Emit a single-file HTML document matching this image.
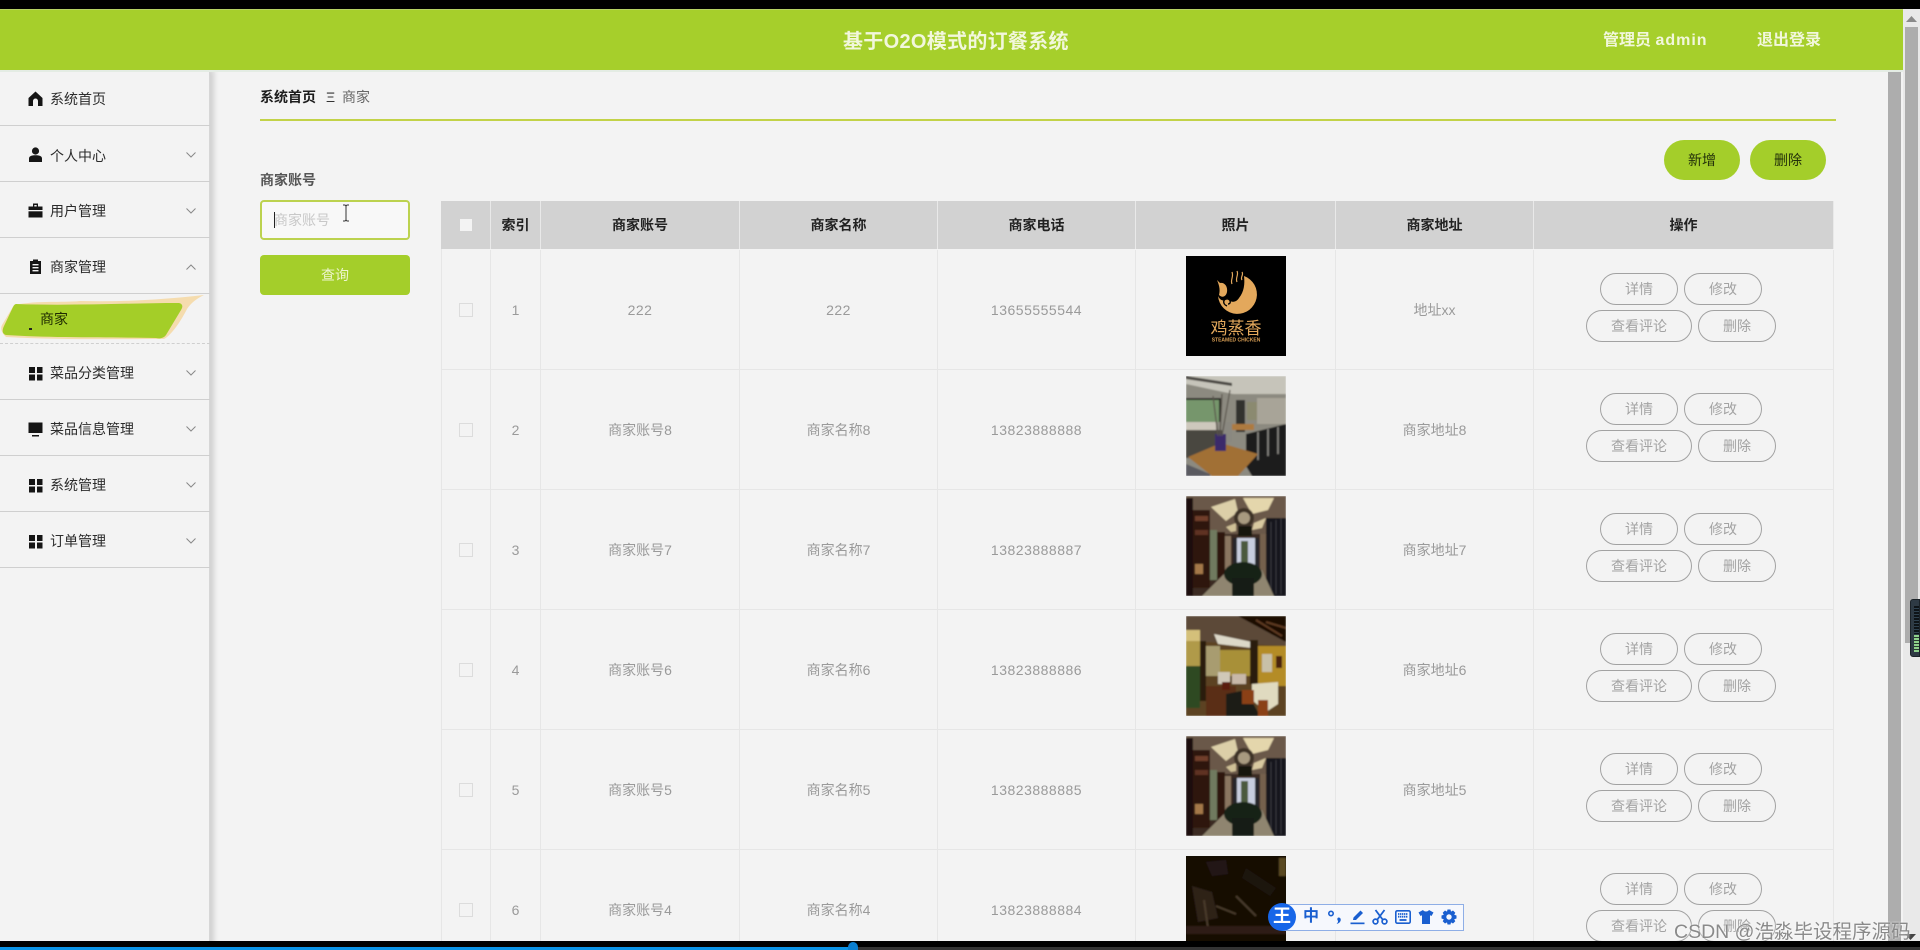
<!DOCTYPE html>
<html lang="zh">
<head>
<meta charset="utf-8">
<title>基于O2O模式的订餐系统</title>
<style>
*{box-sizing:border-box}
html,body{margin:0;padding:0;width:1920px;height:950px;overflow:hidden;background:#000;font-family:"Liberation Sans","Noto Sans CJK SC",sans-serif;font-size:14px}
.a{position:absolute}
#stage{position:absolute;left:0;top:9px;width:1920px;height:932px;overflow:hidden;background:#f3f3f3}
#page{position:absolute;left:0;top:-9px;width:1920px;height:950px;filter:blur(.3px)}
.hdr{left:0;top:9px;width:1903px;height:61px;background:#a6cf2b;border-top:1px solid #b6d263}
.hw{color:#f2f7dc;font-weight:bold;line-height:24px;white-space:nowrap}
.side{left:0;top:70px;width:210px;height:880px;background:#f3f3f3;box-shadow:4px 0 5px rgba(0,0,0,.14);border-right:1px solid #d6d6d6}
.ln{left:0;width:210px;height:1px;background:#cfcfcf}
.mt{left:50px;color:#2b2b2b;line-height:20px;white-space:nowrap}
.ic{left:28px;width:15px;height:15px}
.ch{left:186px;width:10px;height:6px}
.th{top:201px;height:48px;background:#d2d2d2;line-height:48px;text-align:center;font-weight:bold;color:#222;border-right:1px solid #e9e9e9}
.td{height:120px;line-height:120px;text-align:center;color:#9a9a9a;border-right:1px solid #e6e6e6;border-bottom:1px solid #e6e6e6}
.n{letter-spacing:.5px}
.op{height:32px;line-height:30px;border:1px solid #a2a2a2;border-radius:16px;text-align:center;color:#a3a3a3;background:transparent}
.cb{left:459px;width:14px;height:14px;border:1px solid #dcdcdc;background:#f3f3f3}
.pic{left:1186px;width:100px;height:100px;overflow:hidden}
.pic svg{display:block;width:100px;height:100px}
</style>
</head>
<body>
<svg width="0" height="0" style="position:absolute">
<defs>
<filter id="b"><feGaussianBlur stdDeviation="0.7"/></filter>
<symbol id="s3" viewBox="0 0 100 100">
<g filter="url(#b)">
<rect width="100" height="100" fill="#3a2a20"/>
<polygon points="0,0 100,0 100,25 82,38 25,38 0,22" fill="#6a594a"/>
<polygon points="25,11 49,3 52,16 40,25" fill="#dccfa8"/>
<polygon points="57,2 88,2 82,14 66,18" fill="#e4d6ac"/>
<polygon points="40,31 50,27 50,35 45,36" fill="#cfc096"/>
<polygon points="68,27 80,22 76,32 66,34" fill="#d8c9a0"/>
<circle cx="58" cy="22" r="10" fill="#3e3028"/><circle cx="58" cy="22" r="6" fill="#a89a80"/>
<rect x="52" y="30" width="14" height="10" fill="#181410"/>
<rect x="0" y="2" width="7" height="98" fill="#1e0e08"/>
<rect x="7" y="14" width="17" height="78" fill="#2e1509"/>
<rect x="9" y="20" width="13" height="5" fill="#6f3c2a"/>
<rect x="9" y="34" width="13" height="5" fill="#5e3020"/>
<rect x="9" y="68" width="8" height="10" fill="#a4784a"/>
<rect x="24" y="34" width="7" height="50" fill="#6f7a5e"/>
<rect x="31" y="36" width="8" height="46" fill="#2e150c"/>
<rect x="39" y="40" width="6" height="34" fill="#8a7660"/>
<rect x="80" y="22" width="20" height="78" fill="#12151a"/>
<path d="M85 26V98M90 24V98M95 22V98" stroke="#3a3a40" stroke-width="1"/>
<rect x="74" y="38" width="6" height="55" fill="#75614e"/>
<rect x="47" y="42" width="26" height="30" fill="#c8cede"/>
<rect x="55" y="45" width="7" height="24" fill="#4c5a3d"/>
<rect x="47" y="42" width="4" height="30" fill="#28282c"/>
<rect x="69" y="42" width="4" height="30" fill="#28282c"/>
<polygon points="42,74 76,74 88,100 16,100" fill="#8f8570"/>
<ellipse cx="57" cy="78" rx="19" ry="12" fill="#182018"/>
<rect x="46" y="82" width="22" height="18" fill="#161b17"/>
</g>
</symbol>
</defs>
</svg>

<div id="stage"><div id="page">

<div class="a" style="left:1888px;top:70px;width:13px;height:880px;background:#adadad"></div>
<div class="a" style="left:1903px;top:9px;width:17px;height:941px;background:#e9e9e9"></div>
<div class="a" style="left:1905px;top:27px;width:13px;height:616px;background:#adadad"></div>
<svg class="a" style="left:1906px;top:16px" width="11" height="6"><polygon points="5.5,0 11,6 0,6" fill="#8a8a8a"/></svg>
<svg class="a" style="left:1905px;top:934px" width="11" height="6"><polygon points="5.5,6 11,0 0,0" fill="#444"/></svg>
<div class="a" style="left:1910px;top:599px;width:10px;height:58px;background:#2e3a44;border-radius:3px 0 0 3px;border:1px solid #1b2228"></div>
<div class="a" style="left:1914px;top:606px;width:5px;height:28px;background:repeating-linear-gradient(#0e1418 0 2px,#2f4250 2px 3px)"></div>
<div class="a" style="left:1914px;top:635px;width:5px;height:17px;background:repeating-linear-gradient(#8fd18b 0 2px,#2a3a30 2px 3px)"></div>

<div class="a side">
  <div class="a ln" style="top:55px"></div>
  <div class="a ln" style="top:111px"></div>
  <div class="a ln" style="top:167px"></div>
  <div class="a ln" style="top:223px"></div>
  <div class="a" style="left:0;top:273px;width:210px;border-top:1px dashed #cfcfcf"></div>
  <div class="a ln" style="top:329px"></div>
  <div class="a ln" style="top:385px"></div>
  <div class="a ln" style="top:441px"></div>
  <div class="a ln" style="top:497px"></div>
</div>

<!-- icons -->
<svg class="a ic" style="top:91px" viewBox="0 0 15 15"><path d="M7.5 0.5 L14.5 7 V15 H10 V10 A2.5 2.5 0 0 0 5 10 V15 H0.5 V7 Z" fill="#151515"/></svg>
<svg class="a ic" style="top:147px" viewBox="0 0 15 15"><circle cx="7.5" cy="4" r="3.6" fill="#151515"/><path d="M1 15 V11.5 C1 9 4 8.3 7.5 8.3 C11 8.3 14 9 14 11.5 V15 Z" fill="#151515"/></svg>
<svg class="a ic" style="top:203px" viewBox="0 0 15 15"><path d="M5 0.5 H10 V3.5 H14.5 V7 H0.5 V3.5 H5 Z M6.3 2 V3.5 H8.7 V2 Z" fill="#151515" fill-rule="evenodd"/><rect x="0.5" y="8.3" width="14" height="6.2" fill="#151515"/></svg>
<svg class="a ic" style="top:259px" viewBox="0 0 15 15"><path d="M2 2 H5 V0.5 H10 V2 H13 V15 H2 Z" fill="#151515"/><rect x="4.5" y="5" width="6" height="1.4" fill="#f3f3f3"/><rect x="4.5" y="8" width="6" height="1.4" fill="#f3f3f3"/><rect x="4.5" y="11" width="6" height="1.4" fill="#f3f3f3"/></svg>
<svg class="a ic" style="top:366px" viewBox="0 0 15 15"><path d="M1 1h6v6h-6zM9 1h5.5v6h-5.5zM1 8.5h6v6h-6zM9 8.5h5.5v6h-5.5z" fill="#151515"/></svg>
<svg class="a ic" style="top:422px" viewBox="0 0 15 15"><path d="M0.5 0.5H14.5V11H0.5Z" fill="#151515"/><path d="M4 14.5H11V13H4Z" fill="#151515"/></svg>
<svg class="a ic" style="top:478px" viewBox="0 0 15 15"><path d="M1 1h6v6h-6zM9 1h5.5v6h-5.5zM1 8.5h6v6h-6zM9 8.5h5.5v6h-5.5z" fill="#151515"/></svg>
<svg class="a ic" style="top:534px" viewBox="0 0 15 15"><path d="M1 1h6v6h-6zM9 1h5.5v6h-5.5zM1 8.5h6v6h-6zM9 8.5h5.5v6h-5.5z" fill="#151515"/></svg>

<div class="a mt" style="top:89px">系统首页</div>
<div class="a mt" style="top:146px">个人中心</div>
<div class="a mt" style="top:201px">用户管理</div>
<div class="a mt" style="top:257px">商家管理</div>
<div class="a mt" style="top:363px">菜品分类管理</div>
<div class="a mt" style="top:419px">菜品信息管理</div>
<div class="a mt" style="top:475px">系统管理</div>
<div class="a mt" style="top:531px">订单管理</div>

<svg class="a ch" style="top:152px" viewBox="0 0 10 6"><path d="M0.5 0.5 L5 5 L9.5 0.5" fill="none" stroke="#888" stroke-width="1"/></svg>
<svg class="a ch" style="top:208px" viewBox="0 0 10 6"><path d="M0.5 0.5 L5 5 L9.5 0.5" fill="none" stroke="#888" stroke-width="1"/></svg>
<svg class="a ch" style="top:264px" viewBox="0 0 10 6"><path d="M0.5 5.5 L5 1 L9.5 5.5" fill="none" stroke="#888" stroke-width="1"/></svg>
<svg class="a ch" style="top:370px" viewBox="0 0 10 6"><path d="M0.5 0.5 L5 5 L9.5 0.5" fill="none" stroke="#888" stroke-width="1"/></svg>
<svg class="a ch" style="top:426px" viewBox="0 0 10 6"><path d="M0.5 0.5 L5 5 L9.5 0.5" fill="none" stroke="#888" stroke-width="1"/></svg>
<svg class="a ch" style="top:482px" viewBox="0 0 10 6"><path d="M0.5 0.5 L5 5 L9.5 0.5" fill="none" stroke="#888" stroke-width="1"/></svg>
<svg class="a ch" style="top:538px" viewBox="0 0 10 6"><path d="M0.5 0.5 L5 5 L9.5 0.5" fill="none" stroke="#888" stroke-width="1"/></svg>

<!-- active brush -->
<svg class="a" style="left:0;top:293px" width="210" height="50" viewBox="0 0 210 50">
  <path d="M14 12 C40 7 60 10 80 8 C120 9 160 7 204 2 C196 6 191 10 187 16 C182 26 172 42 164 46 C120 46 60 47 6 44 C2 40 0 36 2 32 Z" fill="#f5dcae"/>
  <path d="M16 11 C70 13 130 10 179 10 C183 11 183 14 181 17 L166 42 C164 45 160 46 156 45 C110 44 50 45 6 42 C2 41 2 37 4 33 L13 14 C14 12 15 11 16 11 Z" fill="#a4ce28"/>
</svg>
<div class="a" style="left:40px;top:309px;line-height:20px;color:#1e2a00">商家</div>
<div class="a" style="left:29px;top:328px;width:3px;height:2px;background:#222"></div>

<!-- header -->
<div class="a" style="left:0;top:70px;width:1903px;height:2px;background:#e4ece4"></div>
<div class="a hdr"></div>
<div class="a hw" style="left:843px;top:30px;font-size:20px;letter-spacing:.3px">基于O2O模式的订餐系统</div>
<div class="a hw" style="left:1603px;top:29px;font-size:16px">管理员 <span style="letter-spacing:1px">admin</span></div>
<div class="a hw" style="left:1757px;top:29px;font-size:16px">退出登录</div>

<!-- breadcrumb -->
<div class="a" style="left:260px;top:87px;line-height:20px;font-weight:bold;color:#1c1c1c">系统首页</div>
<div class="a" style="left:326px;top:87px;line-height:20px;color:#333">Ξ</div>
<div class="a" style="left:342px;top:87px;line-height:20px;color:#666">商家</div>
<div class="a" style="left:260px;top:118.5px;width:1576px;height:2px;background:#c2d247"></div>

<!-- action buttons -->
<div class="a" style="left:1664px;top:140px;width:76px;height:40px;border-radius:20px;background:#a4ce2a;color:#23300a;text-align:center;line-height:40px">新增</div>
<div class="a" style="left:1750px;top:140px;width:76px;height:40px;border-radius:20px;background:#a4ce2a;color:#23300a;text-align:center;line-height:40px">删除</div>

<!-- search -->
<div class="a" style="left:260px;top:170px;line-height:20px;color:#555;font-weight:bold">商家账号</div>
<div class="a" style="left:260px;top:200px;width:150px;height:40px;border:2px solid #bcd24f;border-radius:4px;background:#f8f8f8;padding-left:12px;line-height:37px;color:#c8c8c8">商家账号</div>
<div class="a" style="left:274px;top:212px;width:1px;height:16px;background:#222"></div>
<svg class="a" style="left:342px;top:204px" width="8" height="18" viewBox="0 0 8 18"><path d="M1 1 H3 L4 2 L5 1 H7 M4 2 V16 M1 17 H3 L4 16 L5 17 H7" fill="none" stroke="#333" stroke-width="1"/></svg>
<div class="a" style="left:260px;top:255px;width:150px;height:40px;border-radius:4px;background:#a4ce2a;color:#eef5cf;text-align:center;line-height:40px">查询</div>

<!-- table head -->
<div class="a th" style="left:441px;width:50px"></div>
<div class="a" style="left:460px;top:219px;width:12px;height:12px;background:#f3f3f3"></div>
<div class="a th" style="left:491px;width:50px">索引</div>
<div class="a th" style="left:541px;width:199px">商家账号</div>
<div class="a th" style="left:740px;width:198px">商家名称</div>
<div class="a th" style="left:938px;width:198px">商家电话</div>
<div class="a th" style="left:1136px;width:200px">照片</div>
<div class="a th" style="left:1336px;width:198px">商家地址</div>
<div class="a th" style="left:1534px;width:300px">操作</div>
<div class="a" style="left:441px;top:249px;width:1px;height:700px;background:#e6e6e6"></div>

<!-- row 1 -->
<div class="a td" style="left:441px;top:250px;width:50px"></div>
<div class="a cb" style="top:303px"></div>
<div class="a td" style="left:491px;top:250px;width:50px">1</div>
<div class="a td n" style="left:541px;top:250px;width:199px">222</div>
<div class="a td n" style="left:740px;top:250px;width:198px">222</div>
<div class="a td n" style="left:938px;top:250px;width:198px">13655555544</div>
<div class="a td" style="left:1136px;top:250px;width:200px"></div>
<div class="a td" style="left:1336px;top:250px;width:198px">地址xx</div>
<div class="a td" style="left:1534px;top:250px;width:300px"></div>
<div class="a pic" style="top:256px;background:#000">
<svg viewBox="0 0 100 100">
<path d="M58 20 A19.5 19.5 0 1 1 32 40 C35 46 39 45 41 42 C44 47 50 47 53 42 C58 36 59 28 58 20 Z" fill="#e3a85c"/>
<path d="M41 50 C36 48 37 42 42 43 C45 44 45 48 42 48" fill="none" stroke="#000" stroke-width="1.4"/>
<path d="M31 24 L34 27 C38 26 42 30 41 36 C40 41 36 42 33 39 C34 35 34 31 31 24 Z" fill="#e3a85c"/>
<path d="M46 28 C44 24 48 21 46 16 M51 26 C49 22 53 19 51 15 M56 24 C54 21 58 19 56 16" fill="none" stroke="#e3a85c" stroke-width="1.2"/>
<text x="50" y="78" text-anchor="middle" font-size="17" fill="#e3a85c" font-family="'Noto Sans CJK SC',sans-serif">鸡蒸香</text>
<text x="50" y="85.5" text-anchor="middle" font-size="5" font-weight="bold" fill="#d99f55" font-family="'Liberation Sans',sans-serif">STEAMED CHICKEN</text>
</svg></div>
<div class="a op" style="left:1600px;top:273px;width:78px">详情</div>
<div class="a op" style="left:1684px;top:273px;width:78px">修改</div>
<div class="a op" style="left:1586px;top:310px;width:106px">查看评论</div>
<div class="a op" style="left:1698px;top:310px;width:78px">删除</div>

<!-- row 2 -->
<div class="a td" style="left:441px;top:370px;width:50px"></div>
<div class="a cb" style="top:423px"></div>
<div class="a td" style="left:491px;top:370px;width:50px">2</div>
<div class="a td" style="left:541px;top:370px;width:199px">商家账号8</div>
<div class="a td" style="left:740px;top:370px;width:198px">商家名称8</div>
<div class="a td n" style="left:938px;top:370px;width:198px">13823888888</div>
<div class="a td" style="left:1136px;top:370px;width:200px"></div>
<div class="a td" style="left:1336px;top:370px;width:198px">商家地址8</div>
<div class="a td" style="left:1534px;top:370px;width:300px"></div>
<div class="a pic" style="top:376px">
<svg viewBox="0 0 100 100"><g filter="url(#b)">
<rect width="100" height="100" fill="#8c8a80"/>
<polygon points="0,0 100,0 100,18 47,18 0,8" fill="#c6c4ba"/>
<polygon points="0,0 46,7 46,10 0,3" fill="#4a4642"/>
<rect x="0" y="24" width="35" height="22" fill="#76966c"/>
<rect x="0" y="22" width="35" height="2" fill="#2a2a28"/>
<rect x="33" y="24" width="2" height="22" fill="#2a2a28"/>
<rect x="0" y="46" width="30" height="8" fill="#cdc8bc"/>
<rect x="0" y="54" width="38" height="28" fill="#4a4640"/>
<rect x="36" y="46" width="10" height="20" fill="#8a8880"/>
<rect x="50" y="24" width="9" height="32" fill="#33312f"/>
<rect x="61" y="26" width="10" height="18" fill="#8b8a70"/>
<rect x="71" y="22" width="29" height="26" fill="#a8a498"/>
<rect x="46" y="48" width="22" height="6" fill="#ad7a40"/>
<polygon points="60,58 100,48 100,100 66,100 60,90" fill="#1c1a1c"/>
<path d="M72 56V84M82 53V80M92 51V78" stroke="#8c8a84" stroke-width="1.6"/>
<polygon points="2,81 35,67 72,78 52,100 26,100" fill="#a16f35"/>
<rect x="29" y="58" width="11" height="17" fill="#3a2b6a"/>
<polygon points="0,88 24,98 24,100 0,100" fill="#5a5a60"/>
<path d="M32 60 L27 20 M36 60 L44 14 M34 60 L36 18" stroke="#5a544c" stroke-width="1.2"/>
</g></svg></div>
<div class="a op" style="left:1600px;top:393px;width:78px">详情</div>
<div class="a op" style="left:1684px;top:393px;width:78px">修改</div>
<div class="a op" style="left:1586px;top:430px;width:106px">查看评论</div>
<div class="a op" style="left:1698px;top:430px;width:78px">删除</div>

<!-- row 3 -->
<div class="a td" style="left:441px;top:490px;width:50px"></div>
<div class="a cb" style="top:543px"></div>
<div class="a td" style="left:491px;top:490px;width:50px">3</div>
<div class="a td" style="left:541px;top:490px;width:199px">商家账号7</div>
<div class="a td" style="left:740px;top:490px;width:198px">商家名称7</div>
<div class="a td n" style="left:938px;top:490px;width:198px">13823888887</div>
<div class="a td" style="left:1136px;top:490px;width:200px"></div>
<div class="a td" style="left:1336px;top:490px;width:198px">商家地址7</div>
<div class="a td" style="left:1534px;top:490px;width:300px"></div>
<div class="a pic" style="top:496px"><svg viewBox="0 0 100 100"><use href="#s3"/></svg></div>
<div class="a op" style="left:1600px;top:513px;width:78px">详情</div>
<div class="a op" style="left:1684px;top:513px;width:78px">修改</div>
<div class="a op" style="left:1586px;top:550px;width:106px">查看评论</div>
<div class="a op" style="left:1698px;top:550px;width:78px">删除</div>

<!-- row 4 -->
<div class="a td" style="left:441px;top:610px;width:50px"></div>
<div class="a cb" style="top:663px"></div>
<div class="a td" style="left:491px;top:610px;width:50px">4</div>
<div class="a td" style="left:541px;top:610px;width:199px">商家账号6</div>
<div class="a td" style="left:740px;top:610px;width:198px">商家名称6</div>
<div class="a td n" style="left:938px;top:610px;width:198px">13823888886</div>
<div class="a td" style="left:1136px;top:610px;width:200px"></div>
<div class="a td" style="left:1336px;top:610px;width:198px">商家地址6</div>
<div class="a td" style="left:1534px;top:610px;width:300px"></div>
<div class="a pic" style="top:616px">
<svg viewBox="0 0 100 100"><g filter="url(#b)">
<rect width="100" height="100" fill="#5c4320"/>
<polygon points="0,0 55,0 100,22 100,30 0,25" fill="#5c4838"/>
<polygon points="52,0 100,0 100,26" fill="#1a0a06"/>
<path d="M80 6 L100 12 M70 4 L96 20" stroke="#5e3a20" stroke-width="2"/>
<rect x="0" y="14" width="14" height="11" fill="#d4c07a"/>
<polygon points="28,18 66,26 66,32 32,28" fill="#dcd8c8"/>
<rect x="0" y="25" width="14" height="30" fill="#b09a48"/>
<rect x="14" y="25" width="6" height="60" fill="#2a1c10"/>
<rect x="20" y="30" width="14" height="30" fill="#a89c70"/>
<rect x="34" y="34" width="30" height="26" fill="#a89038"/>
<rect x="64" y="24" width="8" height="44" fill="#2a1c10"/>
<rect x="72" y="30" width="28" height="40" fill="#b48c28"/>
<rect x="76" y="38" width="10" height="18" fill="#c8c0a8"/>
<rect x="90" y="40" width="6" height="12" fill="#4a2010"/>
<rect x="0" y="50" width="14" height="42" fill="#2f4a20"/>
<rect x="20" y="70" width="30" height="30" fill="#5a2f16"/>
<rect x="32" y="56" width="12" height="12" fill="#d0c8b8"/>
<rect x="36" y="66" width="8" height="8" fill="#5a1c10"/>
<rect x="46" y="58" width="14" height="10" fill="#c8b8a8"/>
<polygon points="66,68 92,66 92,88 80,96 66,84" fill="#e0dac0"/>
<polygon points="40,78 60,74 74,100 40,100" fill="#1d1a14"/>
<rect x="56" y="74" width="12" height="14" fill="#8a3f18"/>
<rect x="72" y="84" width="10" height="16" fill="#8a3f18"/>
</g></svg></div>
<div class="a op" style="left:1600px;top:633px;width:78px">详情</div>
<div class="a op" style="left:1684px;top:633px;width:78px">修改</div>
<div class="a op" style="left:1586px;top:670px;width:106px">查看评论</div>
<div class="a op" style="left:1698px;top:670px;width:78px">删除</div>

<!-- row 5 -->
<div class="a td" style="left:441px;top:730px;width:50px"></div>
<div class="a cb" style="top:783px"></div>
<div class="a td" style="left:491px;top:730px;width:50px">5</div>
<div class="a td" style="left:541px;top:730px;width:199px">商家账号5</div>
<div class="a td" style="left:740px;top:730px;width:198px">商家名称5</div>
<div class="a td n" style="left:938px;top:730px;width:198px">13823888885</div>
<div class="a td" style="left:1136px;top:730px;width:200px"></div>
<div class="a td" style="left:1336px;top:730px;width:198px">商家地址5</div>
<div class="a td" style="left:1534px;top:730px;width:300px"></div>
<div class="a pic" style="top:736px"><svg viewBox="0 0 100 100"><use href="#s3"/></svg></div>
<div class="a op" style="left:1600px;top:753px;width:78px">详情</div>
<div class="a op" style="left:1684px;top:753px;width:78px">修改</div>
<div class="a op" style="left:1586px;top:790px;width:106px">查看评论</div>
<div class="a op" style="left:1698px;top:790px;width:78px">删除</div>

<!-- row 6 -->
<div class="a td" style="left:441px;top:850px;width:50px"></div>
<div class="a cb" style="top:903px"></div>
<div class="a td" style="left:491px;top:850px;width:50px">6</div>
<div class="a td" style="left:541px;top:850px;width:199px">商家账号4</div>
<div class="a td" style="left:740px;top:850px;width:198px">商家名称4</div>
<div class="a td n" style="left:938px;top:850px;width:198px">13823888884</div>
<div class="a td" style="left:1136px;top:850px;width:200px"></div>
<div class="a td" style="left:1336px;top:850px;width:198px"></div>
<div class="a td" style="left:1534px;top:850px;width:300px"></div>
<div class="a pic" style="top:856px;background:#120806">
<svg viewBox="0 0 100 100"><g filter="url(#b)">
<rect width="100" height="100" fill="#120806"/>
<polygon points="20,6 40,4 42,18 26,20" fill="#241812"/>
<polygon points="60,12 90,32 84,40 56,22" fill="#1f130d"/>
<polygon points="6,30 26,36 32,62 12,66" fill="#2e2218"/>
<path d="M30 50 L50 58 M50 40 L70 60 M18 44 L22 72" stroke="#4a3a2a" stroke-width="2"/>
<rect x="0" y="70" width="100" height="8" fill="#2e1f16"/>
<rect x="93" y="2" width="7" height="18" fill="#5a4a22"/>
</g></svg></div>
<div class="a op" style="left:1600px;top:873px;width:78px">详情</div>
<div class="a op" style="left:1684px;top:873px;width:78px">修改</div>
<div class="a op" style="left:1586px;top:910px;width:106px">查看评论</div>
<div class="a op" style="left:1698px;top:910px;width:78px">删除</div>

<!-- IME toolbar -->
<div class="a" style="left:1282px;top:904px;width:182px;height:27px;background:#f6f8fd;border:1px solid #8eaee6"></div>
<div class="a" style="left:1268px;top:903px;width:28px;height:28px;border-radius:50%;background:#1766e8"></div>
<div class="a" style="left:1268px;top:903px;width:28px;line-height:27px;text-align:center;color:#fff;font-size:18px;font-weight:bold">王</div>
<div class="a" style="left:1303px;top:906px;line-height:22px;color:#1a5fd0;font-size:16px;font-weight:bold">中</div>
<svg class="a" style="left:1327px;top:909px" width="16" height="16" viewBox="0 0 16 16"><circle cx="4" cy="4.5" r="2.2" fill="none" stroke="#1a5fd0" stroke-width="1.6"/><path d="M11.5 8.5 C14 8.5 14 11 13.5 12 C13 13.5 11.5 14.5 9.5 15 C11 13.5 11.3 12.5 10.8 11.5 C10 10.5 10.3 8.5 11.5 8.5Z" fill="#1a5fd0"/></svg>
<svg class="a" style="left:1350px;top:909px" width="16" height="16" viewBox="0 0 16 16"><path d="M3 11 L3.5 8.5 L10.5 1.5 L13 4 L6 11 Z" fill="#1a5fd0"/><rect x="0.5" y="13.5" width="14" height="1.7" fill="#1a5fd0"/></svg>
<svg class="a" style="left:1372px;top:909px" width="16" height="16" viewBox="0 0 16 16"><circle cx="3.5" cy="12.5" r="2.4" fill="none" stroke="#1a5fd0" stroke-width="1.7"/><circle cx="12.5" cy="12.5" r="2.4" fill="none" stroke="#1a5fd0" stroke-width="1.7"/><path d="M5 11 L12.5 1 M11 11 L3.5 1" stroke="#1a5fd0" stroke-width="1.8"/></svg>
<svg class="a" style="left:1395px;top:909px" width="16" height="16" viewBox="0 0 16 16"><rect x="0.8" y="1.8" width="14.4" height="12.4" rx="1.5" fill="none" stroke="#1a5fd0" stroke-width="1.6"/><path d="M3 5h10M3 7.7h10" stroke="#1a5fd0" stroke-width="1.8" stroke-dasharray="1.4 .6"/><path d="M4.5 11h7" stroke="#1a5fd0" stroke-width="1.8"/></svg>
<svg class="a" style="left:1418px;top:909px" width="16" height="16" viewBox="0 0 16 16"><path d="M5 1 C6 3 10 3 11 1 L15.5 3.5 L13.5 7 L12 6.2 V15 H4 V6.2 L2.5 7 L0.5 3.5 Z" fill="#1a5fd0"/></svg>
<svg class="a" style="left:1441px;top:909px" width="16" height="16" viewBox="0 0 16 16"><path d="M6.5 0.5H9.5L10 2.6L12 1.5L14.3 3.8L13.2 5.8L15.5 6.5V9.5L13.2 10.2L14.3 12.2L12 14.5L10 13.4L9.5 15.5H6.5L6 13.4L4 14.5L1.7 12.2L2.8 10.2L0.5 9.5V6.5L2.8 5.8L1.7 3.8L4 1.5L6 2.6Z" fill="#1a5fd0"/><circle cx="8" cy="8" r="2.7" fill="#f6f8fd"/></svg>

<!-- watermark -->
<div class="a" style="left:1674px;top:919px;line-height:26px;font-size:19.5px;color:#8a8a8a;white-space:nowrap;text-shadow:0 0 2px #fff">CSDN @浩淼毕设程序源码</div>

</div></div>

<!-- bottom bars -->
<div class="a" style="left:0;top:941px;width:1920px;height:6px;background:#000"></div>
<div class="a" style="left:0;top:947px;width:1920px;height:3px;background:#333"></div>
<div class="a" style="left:0;top:947px;width:853px;height:3px;background:#0a93e6"></div>
<div class="a" style="left:848px;top:942px;width:10px;height:8px;border-radius:5px 5px 0 0;background:#0a7fd0"></div>
</body>
</html>
